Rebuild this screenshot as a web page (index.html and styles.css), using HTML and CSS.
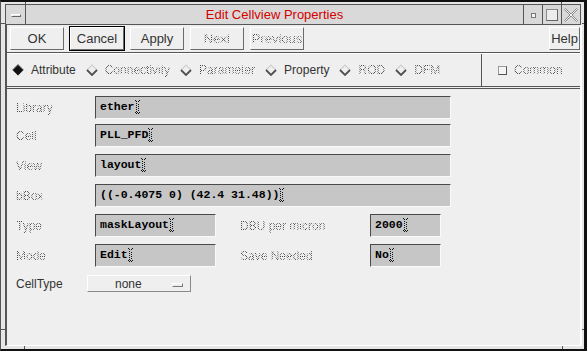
FILE: index.html
```html
<!DOCTYPE html>
<html>
<head>
<meta charset="utf-8">
<link rel="stylesheet" href="styles.css">
</head>
<body>
<div class="window">
  <div class="titlebar">
    <div class="tb-menu"><span class="dash"></span></div>
    <div class="tb-title">Edit Cellview Properties</div>
    <div class="tb-btn"><span class="ico-min"></span></div>
    <div class="tb-btn"><span class="ico-max"></span></div>
    <div class="tb-btn">
      <svg width="14" height="14" viewBox="0 0 14 14"><polygon points="0.5,1.5 1.5,0.5 7,6 12.5,0.5 13.5,1.5 8,7 13.5,12.5 12.5,13.5 7,8 1.5,13.5 0.5,12.5 6,7" fill="#f4f4f4" stroke="#8a8a8a" stroke-width="1"/></svg>
    </div>
  </div>
  <div class="client">
    <div class="btnrow">
      <button class="btn">OK</button>
      <button class="btn focus">Cancel</button>
      <button class="btn">Apply</button>
      <button class="btn"><span class="dis">Next</span></button>
      <button class="btn"><span class="dis">Previous</span></button>
      <button class="btn help">Help</button>
    </div>
    <div class="tabrow">
      <div class="tabs">
        <div class="tab"><svg class="dia" width="12" height="12" viewBox="0 0 12 12"><polygon points="6,0.5 11.5,6 6,11.5 0.5,6" fill="#111"/><polyline points="0.5,6 6,0.5 11.5,6" fill="none" stroke="#777" stroke-width="1"/></svg><span>Attribute</span></div>
        <div class="tab"><svg class="dia" width="12" height="12" viewBox="0 0 12 12"><polyline points="1,6 6,1 11,6" fill="none" stroke="#d0d0d0" stroke-width="1.2"/><polyline points="1,6 6,11 11,6" fill="none" stroke="#505050" stroke-width="1.8"/></svg><span class="dis">Connectivity</span></div>
        <div class="tab"><svg class="dia" width="12" height="12" viewBox="0 0 12 12"><polyline points="1,6 6,1 11,6" fill="none" stroke="#d0d0d0" stroke-width="1.2"/><polyline points="1,6 6,11 11,6" fill="none" stroke="#505050" stroke-width="1.8"/></svg><span class="dis">Parameter</span></div>
        <div class="tab"><svg class="dia" width="12" height="12" viewBox="0 0 12 12"><polyline points="1,6 6,1 11,6" fill="none" stroke="#d0d0d0" stroke-width="1.2"/><polyline points="1,6 6,11 11,6" fill="none" stroke="#505050" stroke-width="1.8"/></svg><span>Property</span></div>
        <div class="tab"><svg class="dia" width="12" height="12" viewBox="0 0 12 12"><polyline points="1,6 6,1 11,6" fill="none" stroke="#d0d0d0" stroke-width="1.2"/><polyline points="1,6 6,11 11,6" fill="none" stroke="#505050" stroke-width="1.8"/></svg><span class="dis">ROD</span></div>
        <div class="tab"><svg class="dia" width="12" height="12" viewBox="0 0 12 12"><polyline points="1,6 6,1 11,6" fill="none" stroke="#d0d0d0" stroke-width="1.2"/><polyline points="1,6 6,11 11,6" fill="none" stroke="#505050" stroke-width="1.8"/></svg><span class="dis">DFM</span></div>
      </div>
      <div class="common"><span class="chk"></span><span class="dis">Common</span></div>
    </div>
    <div class="form">
      <div class="row r1">
        <span class="label dis">Library</span>
        <div class="field w-long">ether<svg class="cur" width="5" height="14" viewBox="0 0 5 14"><path d="M0 0h1v1H0zM4 0h1v1H4zM1 1h1v1H1zM3 1h1v1H3zM1 3h1v1H1zM3 4h1v1H3zM1 5h1v1H1zM3 6h1v1H3zM1 7h1v1H1zM3 8h1v1H3zM1 9h1v1H1zM3 10h1v1H3zM1 11h1v1H1zM0 12h1v1H0zM2 12h1v1H2zM4 12h1v1H4zM1 13h1v1H1zM3 13h1v1H3z" fill="#111"/></svg></div>
      </div>
      <div class="row r2">
        <span class="label dis">Cell</span>
        <div class="field w-long">PLL_PFD<svg class="cur" width="5" height="14" viewBox="0 0 5 14"><path d="M0 0h1v1H0zM4 0h1v1H4zM1 1h1v1H1zM3 1h1v1H3zM1 3h1v1H1zM3 4h1v1H3zM1 5h1v1H1zM3 6h1v1H3zM1 7h1v1H1zM3 8h1v1H3zM1 9h1v1H1zM3 10h1v1H3zM1 11h1v1H1zM0 12h1v1H0zM2 12h1v1H2zM4 12h1v1H4zM1 13h1v1H1zM3 13h1v1H3z" fill="#111"/></svg></div>
      </div>
      <div class="row">
        <span class="label dis">View</span>
        <div class="field w-long">layout<svg class="cur" width="5" height="14" viewBox="0 0 5 14"><path d="M0 0h1v1H0zM4 0h1v1H4zM1 1h1v1H1zM3 1h1v1H3zM1 3h1v1H1zM3 4h1v1H3zM1 5h1v1H1zM3 6h1v1H3zM1 7h1v1H1zM3 8h1v1H3zM1 9h1v1H1zM3 10h1v1H3zM1 11h1v1H1zM0 12h1v1H0zM2 12h1v1H2zM4 12h1v1H4zM1 13h1v1H1zM3 13h1v1H3z" fill="#111"/></svg></div>
      </div>
      <div class="row">
        <span class="label dis">bBox</span>
        <div class="field w-long">((-0.4075 0) (42.4 31.48))<svg class="cur" width="5" height="14" viewBox="0 0 5 14"><path d="M0 0h1v1H0zM4 0h1v1H4zM1 1h1v1H1zM3 1h1v1H3zM1 3h1v1H1zM3 4h1v1H3zM1 5h1v1H1zM3 6h1v1H3zM1 7h1v1H1zM3 8h1v1H3zM1 9h1v1H1zM3 10h1v1H3zM1 11h1v1H1zM0 12h1v1H0zM2 12h1v1H2zM4 12h1v1H4zM1 13h1v1H1zM3 13h1v1H3z" fill="#111"/></svg></div>
      </div>
      <div class="row">
        <span class="label dis">Type</span>
        <div class="field w-mid">maskLayout<svg class="cur" width="5" height="14" viewBox="0 0 5 14"><path d="M0 0h1v1H0zM4 0h1v1H4zM1 1h1v1H1zM3 1h1v1H3zM1 3h1v1H1zM3 4h1v1H3zM1 5h1v1H1zM3 6h1v1H3zM1 7h1v1H1zM3 8h1v1H3zM1 9h1v1H1zM3 10h1v1H3zM1 11h1v1H1zM0 12h1v1H0zM2 12h1v1H2zM4 12h1v1H4zM1 13h1v1H1zM3 13h1v1H3z" fill="#111"/></svg></div>
        <span class="label2 dis">DBU per micron</span>
        <div class="field w-short">2000<svg class="cur" width="5" height="14" viewBox="0 0 5 14"><path d="M0 0h1v1H0zM4 0h1v1H4zM1 1h1v1H1zM3 1h1v1H3zM1 3h1v1H1zM3 4h1v1H3zM1 5h1v1H1zM3 6h1v1H3zM1 7h1v1H1zM3 8h1v1H3zM1 9h1v1H1zM3 10h1v1H3zM1 11h1v1H1zM0 12h1v1H0zM2 12h1v1H2zM4 12h1v1H4zM1 13h1v1H1zM3 13h1v1H3z" fill="#111"/></svg></div>
      </div>
      <div class="row">
        <span class="label dis">Mode</span>
        <div class="field w-mid">Edit<svg class="cur" width="5" height="14" viewBox="0 0 5 14"><path d="M0 0h1v1H0zM4 0h1v1H4zM1 1h1v1H1zM3 1h1v1H3zM1 3h1v1H1zM3 4h1v1H3zM1 5h1v1H1zM3 6h1v1H3zM1 7h1v1H1zM3 8h1v1H3zM1 9h1v1H1zM3 10h1v1H3zM1 11h1v1H1zM0 12h1v1H0zM2 12h1v1H2zM4 12h1v1H4zM1 13h1v1H1zM3 13h1v1H3z" fill="#111"/></svg></div>
        <span class="label2 dis">Save Needed</span>
        <div class="field w-short">No<svg class="cur" width="5" height="14" viewBox="0 0 5 14"><path d="M0 0h1v1H0zM4 0h1v1H4zM1 1h1v1H1zM3 1h1v1H3zM1 3h1v1H1zM3 4h1v1H3zM1 5h1v1H1zM3 6h1v1H3zM1 7h1v1H1zM3 8h1v1H3zM1 9h1v1H1zM3 10h1v1H3zM1 11h1v1H1zM0 12h1v1H0zM2 12h1v1H2zM4 12h1v1H4zM1 13h1v1H1zM3 13h1v1H3z" fill="#111"/></svg></div>
      </div>
      <div class="row rmenu">
        <span class="label">CellType</span>
        <div class="menu"><span>none</span><span class="ind"></span></div>
      </div>
    </div>
  </div>
  <span class="mk mk-t1"></span>
  <span class="mk mk-t2"></span>
  <span class="mk mk-l1"></span>
  <span class="mk mk-r1"></span>
  <span class="mk mk-l2"></span>
  <span class="mk mk-r2"></span>
  <span class="mk mk-b1"></span>
  <span class="mk mk-b2"></span>
</div>
</body>
</html>
```

FILE: styles.css
```css
* { box-sizing: border-box; }
html, body { margin: 0; padding: 0; }
body {
  width: 587px;
  height: 351px;
  overflow: hidden;
  font-family: "Liberation Sans", Arial, sans-serif;
  background: #e4e4e4;
}

.window {
  position: relative;
  width: 587px;
  height: 351px;
  background: #e6e6e6;
  border-top: 2px solid #111;
  border-left: 1px solid #555;
  border-right: 3px solid #111;
  border-bottom: 2px solid #111;
  padding: 2px 2px 3px 4px;
  display: flex;
  flex-direction: column;
}

/* title bar */
.titlebar {
  height: 21px;
  flex: none;
  display: flex;
  margin-right: 1px;
  border: 1px solid #555;
  background: #d9d9d9;
}
.tb-menu {
  width: 20px;
  border-right: 1px solid #555;
  display: flex;
  align-items: center;
  justify-content: center;
}
.dash {
  width: 10px;
  height: 3px;
  border-top: 1px solid #fff;
  border-left: 1px solid #fff;
  border-bottom: 1px solid #666;
  border-right: 1px solid #666;
  background: #e8e8e8;
  margin-left: 1px;
  margin-top: 2px;
}
.tb-title {
  flex: 1;
  text-align: center;
  color: #d40000;
  font-size: 13px;
  line-height: 19px;
}
.tb-btn {
  width: 19px;
  border-left: 1px solid #555;
  display: flex;
  align-items: center;
  justify-content: center;
}
.ico-min {
  width: 5px;
  height: 5px;
  border: 1px solid #777;
  background: #f4f4f4;
  margin-top: 1px;
}
.ico-max {
  width: 12px;
  height: 12px;
  border: 1px solid #8a8a8a;
  border-right-color: #666;
  border-bottom-color: #666;
  background: #ececec;
}

/* client area */
.client {
  flex: 1;
  background: #efefef;
  border-left: 2px solid #555;
  border-right: 2px solid #fff;
  border-bottom: 1px solid #fff;
  display: flex;
  flex-direction: column;
}

.btnrow {
  height: 28px;
  flex: none;
  display: flex;
  align-items: center;
  gap: 6px;
  padding: 2px 0 2px 3px;
  border-bottom: 1px solid #555;
}
.btn {
  width: 54px;
  height: 23px;
  padding: 0;
  background: #efefef;
  border: 1px solid;
  border-color: #fff #6a6a6a #6a6a6a #fff;
  font-family: "Liberation Sans", Arial, sans-serif;
  font-size: 13px;
  color: #333;
}
.focus { outline: 1px solid #000; }
.help { width: 31px; margin-left: auto; }

.tabrow {
  height: 36px;
  flex: none;
  display: flex;
  border-bottom: 3px double #555;
  border-top: 1px solid #fff;
}
.tabs {
  width: 475px;
  display: flex;
  align-items: center;
  gap: 10px;
  padding-left: 5px;
  border-right: 1px solid #555;
}
.tab {
  display: flex;
  align-items: center;
  gap: 7px;
  font-size: 12px;
  color: #333;
}
.dia { flex: none; }
.common {
  display: flex;
  align-items: center;
  gap: 7px;
  padding-left: 16px;
  font-size: 12px;
}
.chk {
  width: 9px;
  height: 9px;
  border: 1px solid #9a9a9a;
  border-right-color: #555;
  border-bottom-color: #555;
  background: #f4f4f4;
}

/* form */
.form {
  padding: 0 0 0 9px;
  display: flex;
  flex-direction: column;
}
.row {
  display: flex;
  align-items: center;
  height: 23px;
  margin-top: 7px;
}
.r2 { margin-top: 5px; }
.label {
  width: 79px;
  flex: none;
  font-size: 12px;
  color: #333;
}
.label2 {
  width: 130px;
  margin-left: 24px;
  font-size: 12px;
}
.field {
  height: 23px;
  display: flex;
  align-items: center;
  padding: 0 0 2px 4px;
  background: #c6c6c6;
  border: 1px solid;
  border-color: #4a4a4a #fafafa #fafafa #4a4a4a;
  font-family: "Liberation Mono", "Courier New", monospace;
  font-weight: bold;
  font-size: 11.5px;
  color: #000;
  white-space: pre;
}
.cur { margin-top: 1px; flex: none; }
.w-long { width: 356px; }
.w-mid { width: 121px; }
.w-short { width: 71px; }

.rmenu { height: 17px; margin-top: 8px; }
.menu {
  margin-left: -8px;
  width: 104px;
  height: 17px;
  display: flex;
  align-items: center;
  padding-left: 27px;
  border: 1px solid;
  border-color: #fff #8a8a8a #8a8a8a #fff;
  font-size: 12px;
  color: #333;
}
.ind {
  margin-left: auto;
  margin-right: 7px;
  width: 11px;
  height: 4px;
  border: 1px solid;
  border-color: #fff #777 #777 #fff;
  margin-top: 3px;
}

/* disabled (stippled) text */
.dis {
  color: transparent;
  background-image: repeating-conic-gradient(#4a4a4a 0 25%, transparent 0 50%);
  background-size: 2px 2px;
  -webkit-background-clip: text;
  background-clip: text;
}

/* frame resize marks */
.mk { position: absolute; background: #555; }
.mk-t1 { left: 24px; top: 0; width: 1px; height: 2px; }
.mk-t2 { left: 560px; top: 0; width: 1px; height: 2px; }
.mk-l1 { left: 0; top: 21px; width: 4px; height: 1px; }
.mk-r1 { left: 581px; top: 21px; width: 2px; height: 1px; }
.mk-l2 { left: 0; top: 327px; width: 4px; height: 1px; }
.mk-r2 { left: 581px; top: 327px; width: 2px; height: 1px; }
.mk-b1 { left: 23px; top: 344px; width: 1px; height: 3px; }
.mk-b2 { left: 561px; top: 344px; width: 1px; height: 3px; }
```
